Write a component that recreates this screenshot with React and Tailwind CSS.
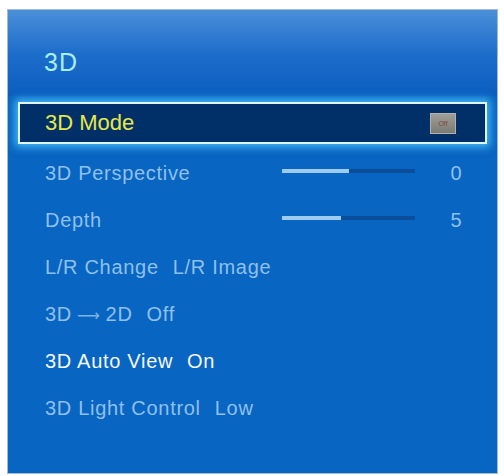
const font = { fontFamily: '"Liberation Sans", Arial, sans-serif' };

function SliderRow({ label, value, fill }) {
  return (
    <div className="flex h-[47px] items-center">
      <span className="w-[237px] text-[20px] leading-none tracking-[0.7px] text-[#8fc0ec]">
        {label}
      </span>
      <div className="mb-1 flex h-[4px] w-[133px] bg-[#0a4d98]">
        <div className={`h-full bg-[#9ecbef] ${fill}`} />
      </div>
      <span className="ml-[26px] w-[30px] text-center text-[20px] leading-none text-[#8fc0ec]">
        {value}
      </span>
    </div>
  );
}

function TextRow({ label, value, active }) {
  const color = active ? "text-[#f4f8fc]" : "text-[#8fc0ec]";
  return (
    <div className={`flex h-[47px] items-center text-[20px] leading-none tracking-[0.7px] ${color}`}>
      <span>{label}</span>
      <span className="ml-[14px]">{value}</span>
    </div>
  );
}

export default function App() {
  return (
    <div className="h-[476px] w-[504px] bg-white pl-[7px] pt-[9px]" style={font}>
      <div className="flex h-[465px] w-[491px] flex-col border border-[#a3b9cf] bg-[#0865c1]">
        {/* header */}
        <div className="h-[86px] bg-gradient-to-b from-[#4a8fd8] via-[#1d6ecb] to-[#0a5dbf] pl-[36px] pt-[40px]">
          <span className="text-[25px] leading-none tracking-[1px] text-[#a8eefb]">3D</span>
        </div>

        {/* selected item */}
        <div className="mx-[10px] mt-[6px] flex h-[42px] items-center justify-between border-2 border-[#dff6ff] bg-[#012f68] pl-[25px] pr-[29px] shadow-[0_0_8px_3px_rgba(80,200,255,0.85)]">
          <span className="text-[22px] leading-none text-[#e6e84a]">3D Mode</span>
          <div className="flex h-[21px] w-[26px] items-center justify-center border border-[#b3b1aa] bg-gradient-to-b from-[#a09e98] to-[#7c7a74]">
            <span className="text-[7px] leading-none text-[#7a4a40]">Off</span>
          </div>
        </div>

        {/* options */}
        <div className="mt-[5px] flex flex-col pl-[37px]">
          <SliderRow label="3D Perspective" value="0" fill="w-[50%]" />
          <SliderRow label="Depth" value="5" fill="w-[44%]" />
          <TextRow label="L/R Change" value="L/R Image" />
          <TextRow
            label={
              <>
                3D
                <span className="mx-[5px] text-[16px] text-[#7fb2e2]" style={{ fontFamily: '"DejaVu Sans", sans-serif' }}>
                  ⟶
                </span>
                2D
              </>
            }
            value="Off"
          />
          <TextRow label="3D Auto View" value="On" active />
          <TextRow label="3D Light Control" value="Low" />
        </div>
      </div>
    </div>
  );
}
